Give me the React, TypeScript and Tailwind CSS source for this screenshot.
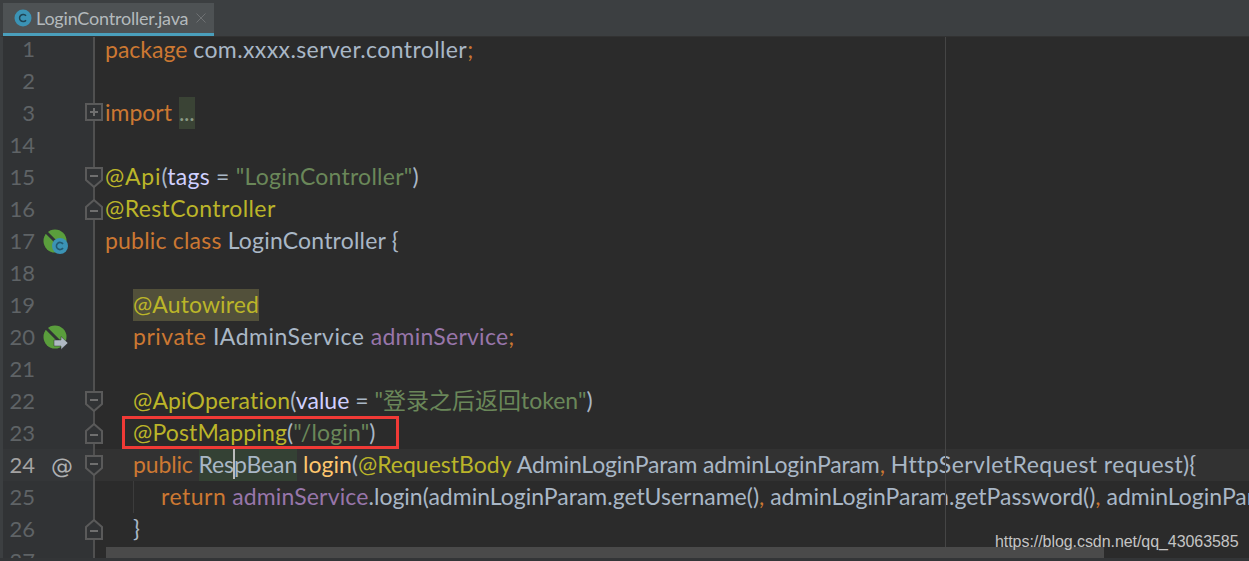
const FONT = "font-['Lato','Noto_Sans_CJK_SC',sans-serif]";

const KW = "text-[#cc7832]";
const TX = "text-[#a9b7c6]";
const AN = "text-[#bbb529]";
const ST = "text-[#6a8759]";
const PU = "text-[#9876aa]";
const PA = "text-[#d0d0ff]";
const ME = "text-[#ffc66d]";

function FoldIcon({ type }: { type: "plus" | "down" | "up" }) {
  const shape =
    type === "plus"
      ? "M1 1H17V17H1Z"
      : type === "down"
        ? "M1 1H17V13L9 20L1 13Z"
        : "M1 20H17V8L9 1L1 8Z";
  const midY = type === "plus" ? 9 : type === "down" ? 9 : 12;
  return (
    <svg width="18" height="21" viewBox="0 0 18 21" className="absolute right-[-10px] top-[6px] z-10">
      <path d={shape} fill="#313335" stroke="#5a5a5a" strokeWidth="2" />
      <path d={`M5 ${midY}H13`} stroke="#6f6f6f" strokeWidth="2" />
      {type === "plus" && <path d="M9 5V13" stroke="#6f6f6f" strokeWidth="2" />}
    </svg>
  );
}

function BeanIcon({ badge }: { badge: "c" | "arrow" }) {
  return (
    <svg width="26" height="26" viewBox="0 0 26 26">
      <circle cx="12" cy="12" r="11.5" fill="#5a9e3c" />
      <path d="M3 3L19 19" stroke="#313335" strokeWidth="3" />
      {badge === "c" ? (
        <>
          <circle cx="17" cy="17" r="8" fill="#3b93b5" />
          <path d="M20 15a3.6 3.6 0 1 0 0 4" fill="none" stroke="#235a70" strokeWidth="1.6" />
        </>
      ) : (
        <path d="M11 15H18V11.5L25 18L18 24.5V21H11Z" fill="#afb9c3" stroke="#313335" strokeWidth="0.5" />
      )}
    </svg>
  );
}

function Row({
  n,
  current,
  marker,
  fold,
  first,
  ls,
  children,
}: {
  n: number;
  current?: boolean;
  marker?: React.ReactNode;
  fold?: "plus" | "down" | "up";
  first?: boolean;
  ls?: string;
  children?: React.ReactNode;
}) {
  return (
    <div className={`flex shrink-0 ${first ? "h-[28px]" : "h-8"} ${current ? "bg-[#323232]" : ""}`}>
      <div className={`relative flex w-[92px] shrink-0 border-r-2 border-[#505050] ${current ? "bg-[#343638]" : "bg-[#313335]"}`}>
        <span className={`w-[32px] shrink-0 text-right text-[22px] ${first ? "leading-6" : "leading-8"} ${current ? "text-[#a4a3a3]" : "text-[#5f6366]"}`}>
          {n}
        </span>
        <span className="flex h-8 w-[40px] shrink-0 items-center pl-[8px] pt-[2px]">{marker}</span>
        {fold && <FoldIcon type={fold} />}
      </div>
      <div className={`pl-[10px] whitespace-nowrap text-[23px] ${first ? "leading-6" : "h-8 leading-[30px]"} ${ls ?? ""}`}>{children}</div>
    </div>
  );
}

export default function App() {
  return (
    <div className={`relative flex h-[561px] w-[1249px] flex-col overflow-hidden bg-[#2b2b2b] ${FONT}`}>
      {/* tab bar */}
      <div className="flex h-[37px] shrink-0 border-t-[3px] border-b border-l-[3px] border-t-[#3c3f41] border-b-[#323232] border-l-[#3c3f41] bg-[#3c3f41]">
        <div className="flex h-[33px] w-[211px] items-center gap-[4px] border-b-[3px] border-[#4a9fbc] bg-[#4e5254] pl-[11px]">
          <svg width="18" height="18" viewBox="0 0 18 18" className="shrink-0">
            <circle cx="9" cy="9" r="8.5" fill="#3b93b5" />
            <path d="M12 6.8a3.6 3.6 0 1 0 0 4.4" fill="none" stroke="#1f4454" strokeWidth="1.5" />
          </svg>
          <span className="text-[18px] tracking-[-0.2px] text-[#b4babd]">LoginController.java</span>
          <svg width="10" height="10" viewBox="0 0 10 10" className="ml-[4px] shrink-0">
            <path d="M0.5 0.5L9.5 9.5M9.5 0.5L0.5 9.5" stroke="#6e7173" strokeWidth="1" />
          </svg>
        </div>
      </div>

      {/* editor */}
      <div className="flex flex-1 flex-col border-l-[3px] border-[#3c3f41]">
        <Row n={1} first>
          <span className={KW}>package</span>{" "}
          <span className={`${TX} tracking-[0.4px]`}>com.xxxx.server.controller</span>
          <span className={KW}>;</span>
        </Row>
        <Row n={2} />
        <Row n={3} fold="plus">
          <span className={KW}>import</span>{" "}
          <span className="ml-px inline-block h-8 bg-[#3a4335] tracking-[-0.2px] text-[#8a9a86]">...</span>
        </Row>
        <Row n={14} />
        <Row n={15} fold="down" ls="tracking-[0.25px]">
          <span className={`${AN} tracking-[0.8px]`}>@Api</span>
          <span className={TX}>(</span>
          <span className={PA}>tags</span>
          <span className={TX}> = </span>
          <span className={ST}>"LoginController"</span>
          <span className={TX}>)</span>
        </Row>
        <Row n={16} fold="up" ls="tracking-[0.4px]">
          <span className={AN}>@RestController</span>
        </Row>
        <Row n={17} marker={<BeanIcon badge="c" />} ls="tracking-[0.2px]">
          <span className={KW}>public class</span> <span className={TX}>LoginController {"{"}</span>
        </Row>
        <Row n={18} />
        <Row n={19} ls="tracking-[0.1px]">
          <span className="ml-[28px] inline-block h-8 bg-[#52503a] text-[#bbb529]">@Autowired</span>
        </Row>
        <Row n={20} marker={<BeanIcon badge="arrow" />} ls="tracking-[0.5px]">
          <span className="ml-[28px]" />
          <span className={KW}>private</span> <span className={TX}>IAdminService</span>{" "}
          <span className={`${PU} tracking-[0.25px]`}>adminService</span>
          <span className={KW}>;</span>
        </Row>
        <Row n={21} />
        <Row n={22} fold="down">
          <span className="ml-[28px]" />
          <span className={`${AN} tracking-[0.15px]`}>@ApiOperation</span>
          <span className={TX}>(</span>
          <span className={PA}>value</span>
          <span className={TX}> = </span>
          <span className={ST}>"登录之后返回token"</span>
          <span className={TX}>)</span>
        </Row>
        <Row n={23} fold="up" ls="tracking-[0.15px]">
          <span className="ml-[28px]" />
          <span className={AN}>@PostMapping</span>
          <span className={TX}>(</span>
          <span className={ST}>"/login"</span>
          <span className={TX}>)</span>
        </Row>
        <Row
          n={24}
          current
          fold="down"
          marker={<span className="ml-[8px] font-['DejaVu_Sans',sans-serif] text-[22px] text-[#afb1b3]">@</span>}
        >
          <span className="ml-[28px]" />
          <span className={`${KW} tracking-[-0.15px]`}>public</span>{" "}
          <span className="inline-block h-8 bg-[#344134] tracking-[-0.1px] text-[#a9b7c6]">
            Res
            <span className="mx-[-1px] inline-block h-[30px] w-[2px] bg-[#bbbbbb] align-top" />
            pBean
          </span>{" "}
          <span className={ME}>login</span>
          <span className={TX}>(</span>
          <span className={AN}>@RequestBody</span>{" "}
          <span className={`${TX} tracking-[-0.15px]`}>AdminLoginParam adminLoginParam</span>
          <span className={KW}>,</span> <span className={`${TX} tracking-[0.45px]`}>HttpServletRequest request</span>
          <span className={TX}>){"{"}</span>
        </Row>
        <Row n={25}>
          <span className="ml-[28px] inline-block h-8 border-l border-[#3c3c3c] pl-[27px] align-top" />
          <span className={`${KW} tracking-[0.5px]`}>return</span>{" "}
          <span className={`${PU} tracking-[0.15px]`}>adminService</span>
          <span className={TX}>.login(adminLoginParam.getUsername()</span>
          <span className={KW}>,</span> <span className={TX}>adminLoginParam.getPassword()</span>
          <span className={KW}>,</span> <span className={TX}>adminLoginParam.getAge()</span>
        </Row>
        <Row n={26} fold="up">
          <span className="ml-[28px] text-[#a9b7c6]">{"}"}</span>
        </Row>
        <Row n={27} />
      </div>

      {/* right margin guide, selection frame, scrollbar and watermark lie over the code */}
      <div className="absolute left-[945px] top-[37px] bottom-0 w-px bg-[#454545]" />
      <div className="absolute left-[122px] top-[416px] h-[33px] w-[277px] border-[3px] border-[#f03a36]" />
      <div className="absolute left-[106px] top-[547px] h-[11px] w-[998px] bg-[#4a4a4a]" />
      <div className="absolute bottom-0 left-0 h-[3px] w-full bg-[#333537]" />
      <div className="absolute left-[995px] top-[532px] font-['Liberation_Sans',sans-serif] text-[16px] leading-5 tracking-[-0.06px] text-[#c4c4c4]">
        https://blog.csdn.net/qq_43063585
      </div>
    </div>
  );
}
